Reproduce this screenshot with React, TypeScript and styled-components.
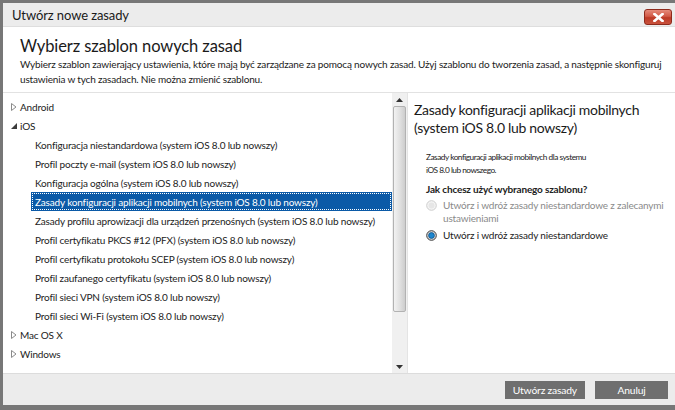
import styled, { createGlobalStyle } from "styled-components";

const GlobalStyle = createGlobalStyle`
  html, body {
    margin: 0;
    padding: 0;
    background: #ffffff;
  }
  body {
    font-family: Lato, "Open Sans", sans-serif;
    color: #222;
    letter-spacing: -0.17px;
  }
`;

const Frame = styled.div`
  width: 675px;
  height: 410px;
  box-sizing: border-box;
  padding: 3px 0 5px 3px;
  background: #777777;
  display: flex;
  flex-direction: column;
`;

const TitleBar = styled.div`
  height: 24px;
  box-sizing: border-box;
  display: flex;
  align-items: center;
  justify-content: space-between;
  padding: 0 3px 0 9px;
  background: #ececec;
  border-bottom: 1px solid #dedede;
`;

const TitleText = styled.span`
  font-size: 13px;
  letter-spacing: -0.1px;
  color: #1a1a1a;
  margin-top: 1px;
`;

const CloseButton = styled.div`
  width: 28px;
  height: 16px;
  box-sizing: border-box;
  margin-top: 5px;
  border: 1px solid #8d2a1c;
  border-radius: 3px;
  background: linear-gradient(#e58a7a 0%, #d25a47 45%, #bd3a26 55%, #c9523d 100%);
  display: flex;
  align-items: center;
  justify-content: center;
`;

const Body = styled.div`
  flex: 1;
  display: flex;
  flex-direction: column;
  background: #ffffff;
  min-height: 0;
`;

const Header = styled.div`
  height: 66px;
  box-sizing: border-box;
  padding: 8px 8px 5px 17px;
  border-bottom: 1px solid #e2e2e2;
`;

const Heading = styled.h1`
  margin: 0;
  font-size: 16.5px;
  font-weight: 400;
  letter-spacing: -0.1px;
  line-height: 22px;
  color: #1a1a1a;
`;

const Lead = styled.p`
  margin: 0;
  font-size: 10px;
  line-height: 15px;
  color: #222;
`;

const Main = styled.div`
  height: 280px;
  display: flex;
`;

const TreePane = styled.div`
  width: 389px;
  padding-top: 4px;
  box-sizing: border-box;
`;

const TreeRow = styled.div<{ $child?: boolean; $selected?: boolean }>`
  height: 19px;
  box-sizing: border-box;
  display: flex;
  align-items: center;
  margin-left: ${(p) => (p.$child ? 28 : 0)}px;
  padding-left: ${(p) => (p.$child ? 4 : 8)}px;
  font-size: 10px;
  color: ${(p) => (p.$selected ? "#ffffff" : "#222")};
  background: ${(p) => (p.$selected ? "#0b5aa7" : "transparent")};
  outline: ${(p) => (p.$selected ? "1px dotted #ffffff" : "none")};
  outline-offset: -2px;
  white-space: nowrap;
`;

const Expander = styled.span`
  width: 9px;
  height: 19px;
  display: flex;
  align-items: center;
`;

const ScrollBar = styled.div`
  width: 15px;
  display: flex;
  flex-direction: column;
  align-items: center;
  background: #f0f0f0;
  border-right: 1px solid #e4e4e4;
`;

const ScrollArrow = styled.div`
  height: 13px;
  width: 100%;
  display: flex;
  align-items: center;
  justify-content: center;
`;

const ScrollThumb = styled.div`
  width: 13px;
  height: 206px;
  box-sizing: border-box;
  border: 1px solid #b2b2b2;
  border-radius: 2px;
  background: linear-gradient(90deg, #f2f2f2, #dedede 60%, #cdcdcd);
`;

const ScrollTrack = styled.div`
  flex: 1;
`;

const DetailPane = styled.div`
  flex: 1;
  padding: 8px 2px 0 6px;
`;

const DetailTitle = styled.h2`
  margin: 0;
  font-size: 14px;
  font-weight: 400;
  letter-spacing: -0.3px;
  line-height: 18px;
  color: #1a1a1a;
`;

const DetailBody = styled.div`
  padding: 14px 0 0 12px;
`;

const DetailText = styled.p`
  margin: 0;
  font-size: 8.3px;
  letter-spacing: -0.5px;
  line-height: 13px;
  color: #222;
  width: 168px;
`;

const Question = styled.p`
  margin: 5px 0 3px;
  font-size: 10px;
  font-weight: 700;
  line-height: 14px;
  color: #222;
`;

const RadioRow = styled.div<{ $disabled?: boolean }>`
  display: flex;
  align-items: flex-start;
  gap: 6px;
  margin-bottom: 4px;
  font-size: 10px;
  line-height: 13px;
  color: ${(p) => (p.$disabled ? "#8a8a8a" : "#222")};
`;

const RadioDot = styled.span`
  flex: none;
  width: 11px;
  height: 13px;
  display: flex;
  align-items: center;
`;

const Footer = styled.div`
  flex: 1;
  display: flex;
  align-items: center;
  justify-content: flex-end;
  gap: 10px;
  padding-right: 7px;
  background: #ececec;
  border-top: 1px solid #dcdcdc;
`;

const FooterButton = styled.button`
  height: 18px;
  min-width: 73px;
  padding: 0 8px;
  border: none;
  background: #6f6f6f;
  color: #ffffff;
  font-family: inherit;
  letter-spacing: inherit;
  font-size: 10.3px;
`;

const Collapsed = () => (
  <svg width="6" height="8" viewBox="0 0 6 8">
    <path d="M0.5 0.5 L5 4 L0.5 7.5 Z" fill="none" stroke="#8a8a8a" strokeWidth="1" />
  </svg>
);

const Expanded = () => (
  <svg width="6" height="6" viewBox="0 0 6 6">
    <path d="M6 0 L6 6 L0 6 Z" fill="#3c3c3c" />
  </svg>
);

const children = [
  "Konfiguracja niestandardowa (system iOS 8.0 lub nowszy)",
  "Profil poczty e-mail (system iOS 8.0 lub nowszy)",
  "Konfiguracja ogólna (system iOS 8.0 lub nowszy)",
  "Zasady konfiguracji aplikacji mobilnych (system iOS 8.0 lub nowszy)",
  "Zasady profilu aprowizacji dla urządzeń przenośnych (system iOS 8.0 lub nowszy)",
  "Profil certyfikatu PKCS #12 (PFX) (system iOS 8.0 lub nowszy)",
  "Profil certyfikatu protokołu SCEP (system iOS 8.0 lub nowszy)",
  "Profil zaufanego certyfikatu (system iOS 8.0 lub nowszy)",
  "Profil sieci VPN (system iOS 8.0 lub nowszy)",
  "Profil sieci Wi-Fi (system iOS 8.0 lub nowszy)",
];

const SELECTED = 3;

export default function App() {
  return (
    <>
      <GlobalStyle />
      <Frame>
        <TitleBar>
          <TitleText>Utwórz nowe zasady</TitleText>
          <CloseButton>
            <svg width="11" height="9" viewBox="0 0 11 9">
              <path d="M1.5 1 L9.5 8 M9.5 1 L1.5 8" stroke="#ffffff" strokeWidth="2.6" strokeLinecap="square" />
            </svg>
          </CloseButton>
        </TitleBar>
        <Body>
          <Header>
            <Heading>Wybierz szablon nowych zasad</Heading>
            <Lead>
              Wybierz szablon zawierający ustawienia, które mają być zarządzane za pomocą nowych zasad. Użyj szablonu do tworzenia zasad, a następnie skonfiguruj ustawienia w tych zasadach. Nie można zmienić szablonu.
            </Lead>
          </Header>
          <Main>
            <TreePane>
              <TreeRow>
                <Expander><Collapsed /></Expander>
                Android
              </TreeRow>
              <TreeRow>
                <Expander><Expanded /></Expander>
                iOS
              </TreeRow>
              {children.map((c, i) => (
                <TreeRow key={c} $child $selected={i === SELECTED}>
                  {c}
                </TreeRow>
              ))}
              <TreeRow>
                <Expander><Collapsed /></Expander>
                Mac OS X
              </TreeRow>
              <TreeRow>
                <Expander><Collapsed /></Expander>
                Windows
              </TreeRow>
            </TreePane>
            <ScrollBar>
              <ScrollArrow>
                <svg width="7" height="4" viewBox="0 0 7 4"><path d="M0 4 L3.5 0 L7 4 Z" fill="#333" /></svg>
              </ScrollArrow>
              <ScrollThumb />
              <ScrollTrack />
              <ScrollArrow>
                <svg width="7" height="4" viewBox="0 0 7 4"><path d="M0 0 L7 0 L3.5 4 Z" fill="#333" /></svg>
              </ScrollArrow>
            </ScrollBar>
            <DetailPane>
              <DetailTitle>
                Zasady konfiguracji aplikacji mobilnych (system iOS 8.0 lub nowszy)
              </DetailTitle>
              <DetailBody>
                <DetailText>
                  Zasady konfiguracji aplikacji mobilnych dla systemu iOS 8.0 lub nowszego.
                </DetailText>
                <Question>Jak chcesz użyć wybranego szablonu?</Question>
                <RadioRow $disabled>
                  <RadioDot>
                    <svg width="11" height="11" viewBox="0 0 11 11">
                      <circle cx="5.5" cy="5.5" r="4.8" fill="#f4f4f4" stroke="#cdcdcd" />
                      <circle cx="5.5" cy="5.5" r="3" fill="#e6e6e6" />
                    </svg>
                  </RadioDot>
                  <span>Utwórz i wdróż zasady niestandardowe z zalecanymi ustawieniami</span>
                </RadioRow>
                <RadioRow>
                  <RadioDot>
                    <svg width="11" height="11" viewBox="0 0 11 11">
                      <circle cx="5.5" cy="5.5" r="4.8" fill="#dcdcdc" stroke="#3a3a3a" />
                      <circle cx="5.5" cy="5.5" r="2.9" fill="#1b86cf" stroke="#0d4f86" strokeWidth="0.8" />
                    </svg>
                  </RadioDot>
                  <span>Utwórz i wdróż zasady niestandardowe</span>
                </RadioRow>
              </DetailBody>
            </DetailPane>
          </Main>
          <Footer>
            <FooterButton>Utwórz zasady</FooterButton>
            <FooterButton>Anuluj</FooterButton>
          </Footer>
        </Body>
      </Frame>
    </>
  );
}
